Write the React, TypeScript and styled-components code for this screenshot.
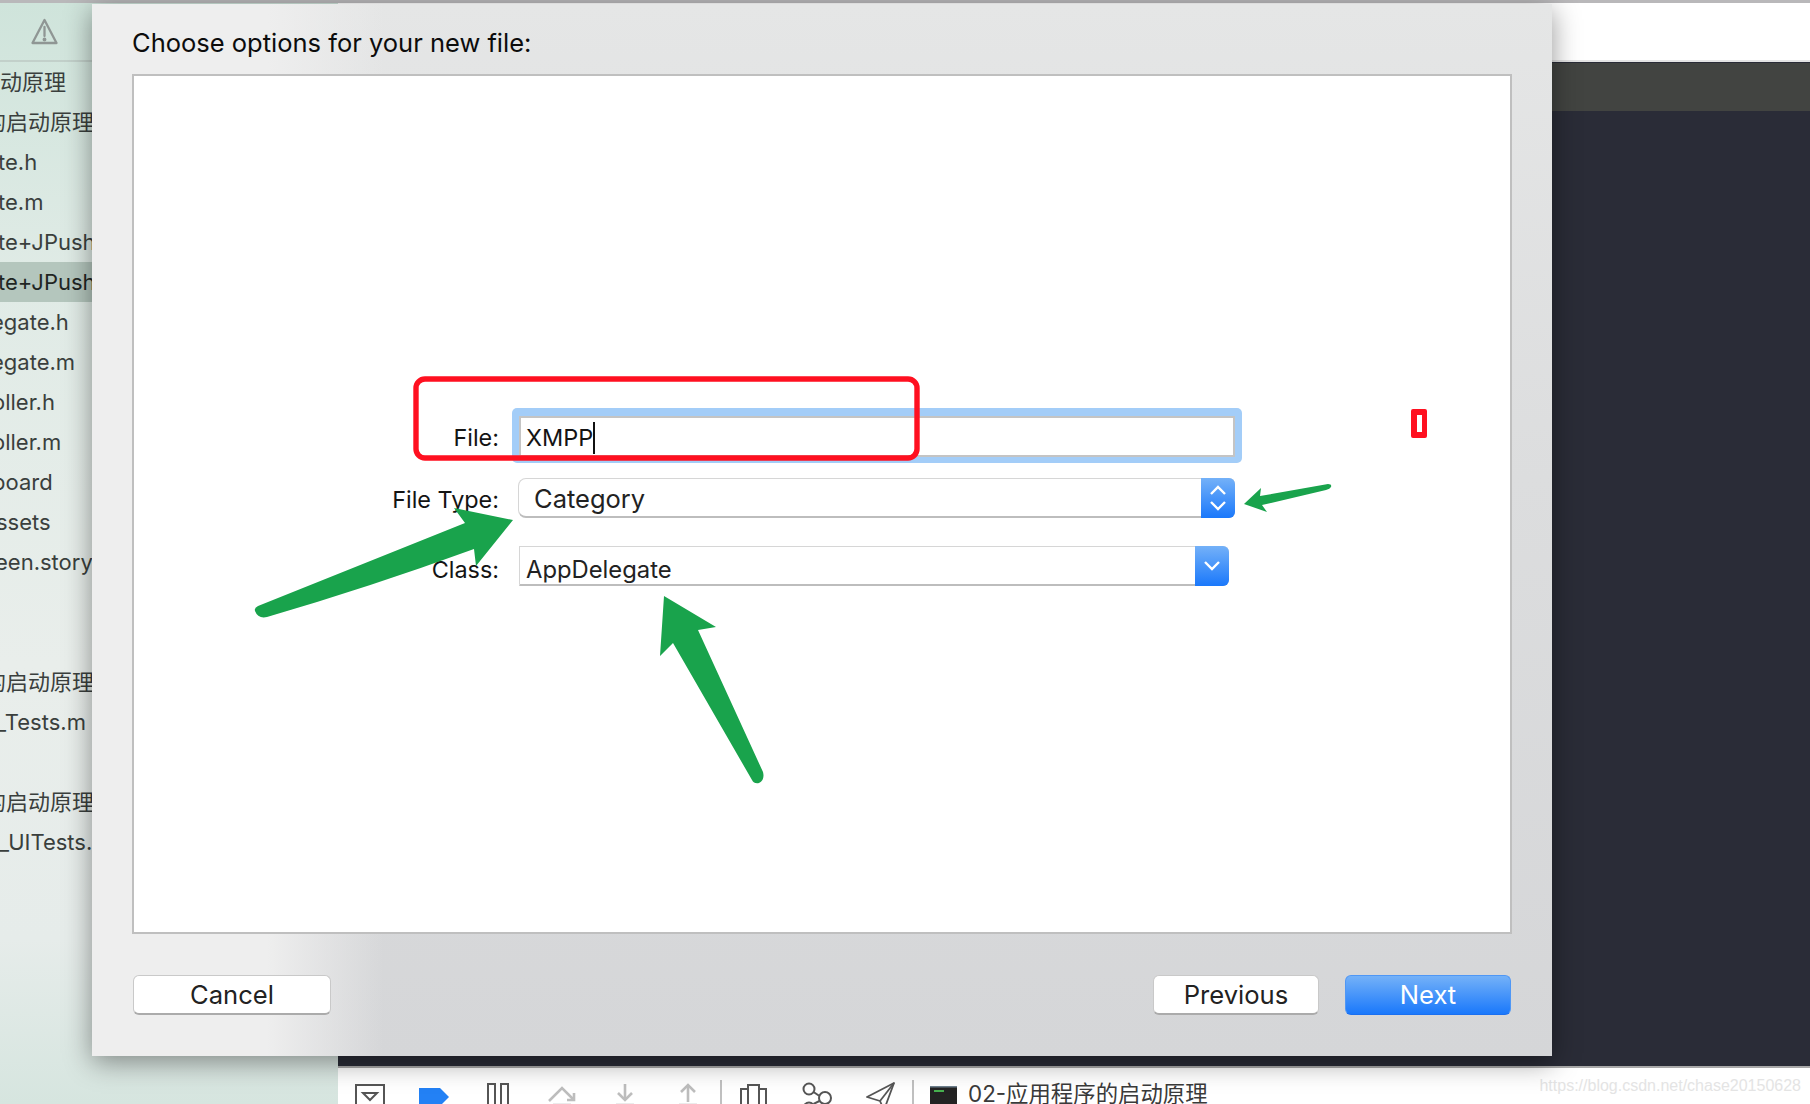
import React from "react";
import styled, { createGlobalStyle } from "styled-components";

const Global = createGlobalStyle`
  html, body { margin: 0; padding: 0; background: #fff; }
  #root { width: 1810px; height: 1104px; }
`;

const FONT = `Inter, "Noto Sans CJK SC", "Liberation Sans", sans-serif`;

const Screen = styled.div`
  position: relative;
  width: 1810px;
  height: 1104px;
  overflow: hidden;
  font-family: ${FONT};
  display: flex;
  flex-direction: column;
`;
const TopEdge = styled.div`
  height: 3px;
  flex: none;
  background: #b9b8ba;
`;
const Workspace = styled.div`
  flex: 1;
  display: flex;
  min-height: 0;
`;
const Sidebar = styled.aside`
  width: 338px;
  flex: none;
  display: flex;
  flex-direction: column;
  background: linear-gradient(180deg, #cfe4db 0%, #e0ebe6 25%, #e9eeeb 60%, #e6ecea 85%, #d6e5df 100%);
`;
const SidebarHeader = styled.div`
  height: 57px;
  flex: none;
  border-bottom: 2px solid #c2d0ca;
  display: flex;
  align-items: center;
  padding-left: 31px;
`;
const FileList = styled.div`
  display: flex;
  flex-direction: column;
  overflow: hidden;
`;
const FileRow = styled.div<{ $selected?: boolean }>`
  height: 40px;
  flex: none;
  display: flex;
  align-items: center;
  white-space: nowrap;
  font-size: 22px;
  color: ${(p) => (p.$selected ? "#1f2523" : "#3a3f3d")};
  background: ${(p) => (p.$selected ? "#b4c6bd" : "transparent")};
`;
const FileName = styled.span<{ $shift?: number; $lift?: number }>`
  margin-left: ${(p) => p.$shift ?? 0}px;
  margin-bottom: ${(p) => p.$lift ?? 0}px;
`;
const Main = styled.main`
  flex: 1;
  display: flex;
  flex-direction: column;
  min-width: 0;
`;
const WindowBar = styled.div`
  height: 57px;
  flex: none;
  background: #fff;
  border-bottom: 2px solid #e4e4e4;
`;
const TabBar = styled.div`
  height: 48px;
  flex: none;
  background: #424441;
  border-top: 1px solid #2a2c37;
`;
const Editor = styled.div`
  flex: 1;
  background: #2a2c37;
  border-bottom: 2px solid #a9a9a9;
`;
const DebugBar = styled.div`
  height: 36px;
  flex: none;
  background: #fff;
  display: flex;
  align-items: flex-start;
  overflow: hidden;
  position: relative;
`;
const ToolIcon = styled.svg<{ $gap: number }>`
  flex: none;
  margin-left: ${(p) => p.$gap}px;
  display: block;
`;
const TargetName = styled.span`
  margin-left: 11px;
  margin-top: 12px;
  font-size: 22.4px;
  line-height: 28px;
  white-space: nowrap;
  color: #3a3a3a;
`;
const Watermark = styled.span`
  position: absolute;
  right: 9px;
  top: 6px;
  font-family: "Liberation Sans", sans-serif;
  font-size: 16px;
  line-height: 24px;
  color: #e4e4e4;
`;

const Sheet = styled.section`
  position: absolute;
  left: 92px;
  top: 4px;
  width: 1460px;
  height: 1052px;
  box-sizing: border-box;
  padding: 0 40px 0 40px;
  display: flex;
  flex-direction: column;
  background:
    linear-gradient(90deg, #eeeeee 0%, #eeeeee 12%, rgba(238, 238, 238, 0) 20%),
    linear-gradient(180deg, #e5e6e6 0%, #dcddde 45%, #d5d6d8 100%);
  box-shadow: 0 6px 26px rgba(0, 0, 0, 0.42);
`;
const SheetTitle = styled.h1`
  margin: 0;
  height: 70px;
  flex: none;
  display: flex;
  align-items: center;
  padding-top: 6px;
  box-sizing: border-box;
  font-size: 25.5px;
  font-weight: 400;
  color: #0c0c0c;
`;
const OptionsBox = styled.div`
  height: 860px;
  flex: none;
  box-sizing: border-box;
  border: 2px solid #bfbfbf;
  background: #fff;
  padding-top: 332px;
  display: flex;
  flex-direction: column;
`;
const FormRow = styled.div<{ $top?: number }>`
  display: flex;
  align-items: center;
  margin-top: ${(p) => p.$top ?? 0}px;
`;
const FieldLabel = styled.label<{ $drop?: number }>`
  width: 365px;
  flex: none;
  text-align: right;
  font-size: 23.4px;
  color: #141414;
  padding-top: ${(p) => p.$drop ?? 0}px;
`;
const FocusRing = styled.div`
  margin-left: 13px;
  padding: 8px 7px 6px;
  border-radius: 5px;
  background: #a3cdf8;
`;
const TextField = styled.div`
  width: 716px;
  height: 41px;
  box-sizing: border-box;
  border: 2px solid #c4c4c4;
  background: #fff;
  display: flex;
  align-items: center;
  padding: 2px 0 0 5px;
  font-size: 23.5px;
  color: #141414;
`;
const Caret = styled.span`
  width: 2px;
  height: 32px;
  background: #111;
`;
const Popup = styled.div<{ $width: number; $gap: number; $radius: number; $size: number }>`
  margin-left: ${(p) => p.$gap}px;
  width: ${(p) => p.$width}px;
  height: 40px;
  box-sizing: border-box;
  display: flex;
  align-items: stretch;
  background: #fff;
  border: 1px solid #d6d6d6;
  border-bottom: 2px solid #bdbdbd;
  border-radius: ${(p) => p.$radius}px 6px 6px ${(p) => p.$radius}px;
  font-size: ${(p) => p.$size}px;
  color: #222;
`;
const PopupValue = styled.span<{ $pad: number; $drop: number }>`
  flex: 1;
  display: flex;
  align-items: center;
  padding-left: ${(p) => p.$pad}px;
  padding-top: ${(p) => p.$drop}px;
`;
const PopupCap = styled.span`
  width: 34px;
  flex: none;
  margin: -1px -1px -2px 0;
  border-radius: 0 6px 6px 0;
  background: linear-gradient(180deg, #74b1f8 0%, #1a78fb 100%);
  display: flex;
  align-items: center;
  justify-content: center;
`;
const Footer = styled.footer`
  flex: 1;
  display: flex;
  align-items: flex-start;
  padding: 41px 1px 0 1px;
`;
const Spacer = styled.div`
  flex: 1;
`;
const Button = styled.button<{ $primary?: boolean; $width: number; $gap?: number }>`
  width: ${(p) => p.$width}px;
  margin-left: ${(p) => p.$gap ?? 0}px;
  height: 40px;
  padding: 0 0 1px;
  border-radius: 6px;
  font-family: inherit;
  font-size: 25.6px;
  color: ${(p) => (p.$primary ? "#fff" : "#222")};
  border: ${(p) => (p.$primary ? "1px solid #4f97f5" : "1px solid #c9c9c9")};
  border-bottom: ${(p) => (p.$primary ? "1px solid #1a6ff0" : "2px solid #ababab")};
  background: ${(p) => (p.$primary ? "linear-gradient(180deg, #74b1f8 0%, #1a78fb 100%)" : "#fff")};
`;
const Annotations = styled.svg`
  position: absolute;
  left: 0;
  top: 0;
  pointer-events: none;
`;

const files: { name: string; shift?: number; lift?: number; selected?: boolean; blank?: boolean }[] = [
  { name: "动原理", shift: 0, lift: 4 },
  { name: "的启动原理", shift: -16, lift: 4 },
  { name: "te.h", shift: -2 },
  { name: "te.m", shift: -2 },
  { name: "te+JPush.h", shift: -2 },
  { name: "te+JPush.m", shift: -2, selected: true },
  { name: "egate.h", shift: -9 },
  { name: "egate.m", shift: -9 },
  { name: "oller.h", shift: -8 },
  { name: "oller.m", shift: -8 },
  { name: "board", shift: -8 },
  { name: "ssets", shift: -4 },
  { name: "een.storyboard", shift: -5 },
  { name: "", blank: true },
  { name: "", blank: true },
  { name: "的启动原理", shift: -16, lift: 4 },
  { name: "_Tests.m", shift: -4 },
  { name: "", blank: true },
  { name: "的启动原理", shift: -16, lift: 4 },
  { name: "_UITests.m", shift: -1 },
];

const GREEN = "#19a34c";
const RED = "#ff1020";
const DARK = "#555";
const GRAY = "#bdbdbd";

export default function App() {
  return (
    <Screen>
      <Global />
      <TopEdge />
      <Workspace>
        <Sidebar>
          <SidebarHeader>
            <svg width="27" height="27" viewBox="0 0 27 27" fill="none" stroke="#8f9694" strokeWidth="2.3" strokeLinejoin="round">
              <path d="M13.5 2 L25.5 25 H1.5 Z" />
              <path d="M13.5 9 V18" strokeLinecap="round" />
              <circle cx="13.5" cy="21.5" r="0.8" fill="#8f9694" />
            </svg>
          </SidebarHeader>
          <FileList>
            {files.map((f, i) => (
              <FileRow key={i} $selected={f.selected}>
                {!f.blank && (
                  <FileName $shift={f.shift} $lift={f.lift}>
                    {f.name}
                  </FileName>
                )}
              </FileRow>
            ))}
          </FileList>
        </Sidebar>
        <Main>
          <WindowBar />
          <TabBar />
          <Editor />
          <DebugBar>
            <ToolIcon $gap={17} width="30" height="36" viewBox="0 0 30 36" fill="none" stroke={DARK} strokeWidth="2">
              <path d="M1 40 V17 H29 V40" />
              <path d="M8 25 H22 L15 32 Z" />
            </ToolIcon>
            <ToolIcon $gap={34} width="30" height="36" viewBox="0 0 30 36">
              <path d="M0 20 H21 L30 29 L21 38 H0 Z" fill="#2381f5" />
            </ToolIcon>
            <ToolIcon $gap={38} width="22" height="36" viewBox="0 0 22 36" fill="none" stroke={DARK} strokeWidth="2">
              <path d="M1 40 V16 H8 V40" />
              <path d="M14 40 V16 H21 V40" />
            </ToolIcon>
            <ToolIcon $gap={39} width="28" height="36" viewBox="0 0 28 36" fill="none" stroke={GRAY} strokeWidth="2.6">
              <path d="M1 33 L14 20 L26 32" />
              <path d="M26 25 V32 H19" />
              <path d="M5 37 H23" />
            </ToolIcon>
            <ToolIcon $gap={40} width="18" height="36" viewBox="0 0 18 36" fill="none" stroke={GRAY} strokeWidth="2.6">
              <path d="M9 16 V32" />
              <path d="M2 25 L9 32 L16 25" />
              <path d="M0 37 H18" />
            </ToolIcon>
            <ToolIcon $gap={45} width="18" height="36" viewBox="0 0 18 36" fill="none" stroke={GRAY} strokeWidth="2.6">
              <path d="M9 34 V17" />
              <path d="M2 24 L9 17 L16 24" />
              <path d="M0 37 H18" />
            </ToolIcon>
            <ToolIcon $gap={23} width="2" height="36" viewBox="0 0 2 36">
              <rect x="0" y="12" width="2" height="24" fill="#c0c0c0" />
            </ToolIcon>
            <ToolIcon $gap={18} width="27" height="36" viewBox="0 0 27 36" fill="none" stroke={DARK} strokeWidth="2">
              <path d="M8 40 V17 H19 V40" />
              <path d="M8 21 H1 V40" />
              <path d="M19 21 H26 V40" />
            </ToolIcon>
            <ToolIcon $gap={35} width="31" height="36" viewBox="0 0 31 36" fill="none" stroke={DARK} strokeWidth="2">
              <circle cx="7" cy="21" r="5.5" />
              <circle cx="23" cy="30" r="6" />
              <circle cx="7" cy="40" r="5.5" />
              <path d="M11.5 24 L17.5 28" />
              <path d="M11.5 36 L17.5 33" />
            </ToolIcon>
            <ToolIcon $gap={33} width="29" height="36" viewBox="0 0 29 36" fill="none" stroke={DARK} strokeWidth="1.8" strokeLinejoin="round">
              <path d="M28 15 L1 29 L14 33 L18 42 Z" />
              <path d="M28 15 L14 33" />
            </ToolIcon>
            <ToolIcon $gap={17} width="2" height="36" viewBox="0 0 2 36">
              <rect x="0" y="12" width="2" height="24" fill="#c0c0c0" />
            </ToolIcon>
            <ToolIcon $gap={16} width="27" height="36" viewBox="0 0 27 36">
              <rect x="0" y="18" width="27" height="18" fill="#232323" />
              <rect x="0" y="18" width="27" height="1.5" fill="#6d7f8c" />
              <rect x="4" y="22" width="10" height="2" fill="#47b04f" />
            </ToolIcon>
            <TargetName>02-应用程序的启动原理</TargetName>
            <Watermark>https://blog.csdn.net/chase20150628</Watermark>
          </DebugBar>
        </Main>
      </Workspace>

      <Sheet>
        <SheetTitle>Choose options for your new file:</SheetTitle>
        <OptionsBox>
          <FormRow>
            <FieldLabel $drop={4}>File:</FieldLabel>
            <FocusRing>
              <TextField>
                XMPP
                <Caret />
              </TextField>
            </FocusRing>
          </FormRow>
          <FormRow $top={15}>
            <FieldLabel $drop={2}>File Type:</FieldLabel>
            <Popup $gap={19} $width={717} $radius={8} $size={25.5}>
              <PopupValue $pad={15} $drop={1}>Category</PopupValue>
              <PopupCap>
                <svg width="20" height="30" viewBox="0 0 20 30" fill="none" stroke="#fff" strokeWidth="2.4">
                  <path d="M3 11 L10 4 L17 11" />
                  <path d="M3 19 L10 26 L17 19" />
                </svg>
              </PopupCap>
            </Popup>
          </FormRow>
          <FormRow $top={28}>
            <FieldLabel $drop={6}>Class:</FieldLabel>
            <Popup $gap={20} $width={710} $radius={0} $size={23.8}>
              <PopupValue $pad={6} $drop={7}>AppDelegate</PopupValue>
              <PopupCap>
                <svg width="20" height="14" viewBox="0 0 20 14" fill="none" stroke="#fff" strokeWidth="2.4">
                  <path d="M3 3 L10 10 L17 3" />
                </svg>
              </PopupCap>
            </Popup>
          </FormRow>
        </OptionsBox>
        <Footer>
          <Button $width={198}>Cancel</Button>
          <Spacer />
          <Button $width={166}>Previous</Button>
          <Button $width={166} $gap={26} $primary>
            Next
          </Button>
        </Footer>
      </Sheet>

      <Annotations width="1810" height="1104" viewBox="0 0 1810 1104">
        <rect x="416" y="379" width="501" height="79" rx="9" fill="none" stroke={RED} strokeWidth="5.4" />
        <path fillRule="evenodd" d="M1413 409 H1425 Q1427 409 1427 411 V436 Q1427 438 1425 438 H1413 Q1411 438 1411 436 V411 Q1411 409 1413 409 Z M1417 415 V432 H1422 V415 Z" fill={RED} />
        <path d="M255 611 Q254 608 258 606 L465 523 L454 508 L513 520 L476 566 L474 549 Q370 587 267 617 Q258 619 255 611 Z" fill={GREEN} />
        <path d="M664 596 L716 627 L698 630 L763 772 Q765 780 759 783 Q754 784 752 780 L673 643 L660 656 Z" fill={GREEN} />
        <path d="M1244 504 L1261 488 L1260 496 L1328 484 Q1332 484 1331 487 Q1330 489 1326 490 L1262 505 L1267 512 Z" fill={GREEN} />
      </Annotations>
    </Screen>
  );
}
